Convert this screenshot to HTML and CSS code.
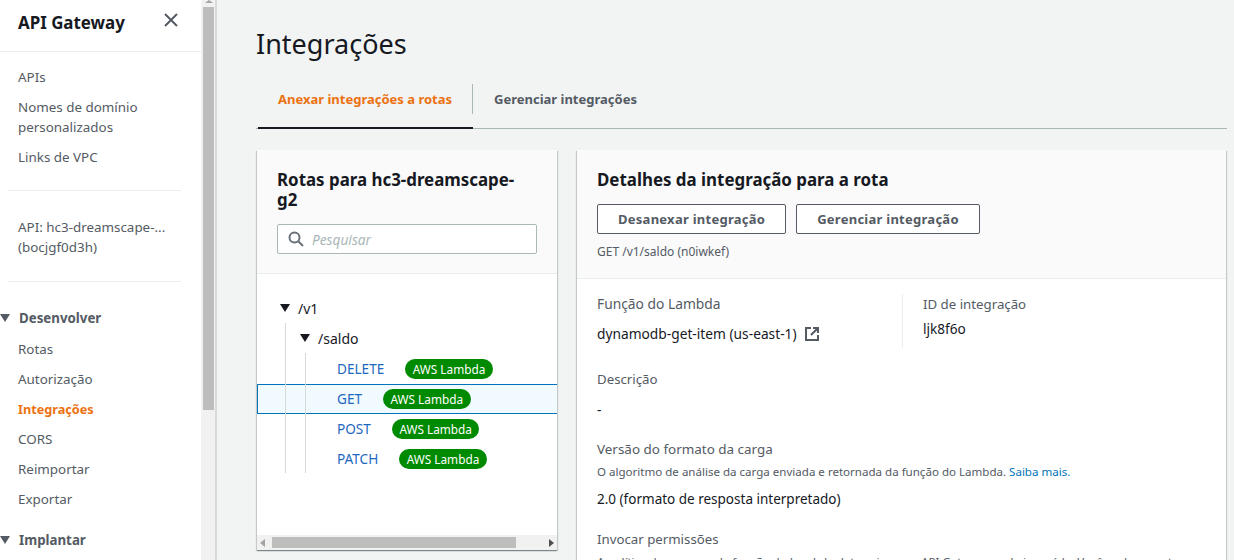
FILE: index.html
```html
<!DOCTYPE html>
<html>
<head>
  <meta charset="utf-8">
  <title>Integrações</title>
  <link rel="stylesheet" href="styles.css">
</head>

<body>
  <nav class="sidebar">
    <div class="side-content">
      <div class="side-head">
        <h2>API Gateway</h2>
        <svg class="close" width="16" height="16" viewBox="0 0 16 16"><path d="M2 2l12 12M14 2L2 14" /></svg>
      </div>
      <ul class="side-list first">
        <li>APIs</li>
        <li>Nomes de domínio personalizados</li>
        <li>Links de VPC</li>
      </ul>
      <hr class="side-line">
      <ul class="side-list api">
        <li>API: hc3-dreamscape-...<br>(bocjgf0d3h)</li>
      </ul>
      <hr class="side-line">
      <div class="side-group"><span class="caret"></span>Desenvolver</div>
      <ul class="side-list sub">
        <li>Rotas</li>
        <li>Autorização</li>
        <li class="active">Integrações</li>
        <li>CORS</li>
        <li>Reimportar</li>
        <li>Exportar</li>
      </ul>
      <div class="side-group"><span class="caret"></span>Implantar</div>
    </div>
    <div class="side-scroll">
      <div class="side-up"></div>
      <div class="side-thumb"></div>
    </div>
  </nav>

  <main class="main">
    <h1>Integrações</h1>
    <div class="tabs">
      <div class="tab active">Anexar integrações a rotas</div>
      <div class="tab">Gerenciar integrações</div>
    </div>

    <div class="columns">
      <section class="card routes">
        <div class="card-head">
          <h3>Rotas para hc3-dreamscape-g2</h3>
          <div class="search">
            <svg width="16" height="16" viewBox="0 0 16 16"><circle cx="6.500" cy="6.500" r="5" /><path d="M10.500 10.500L15 15" /></svg>
            <span>Pesquisar</span>
          </div>
        </div>
        <div class="tree">
          <div class="tree-row level1"><span class="caret dark"></span>/v1</div>
          <div class="tree-row level2"><span class="caret dark"></span>/saldo</div>
          <div class="tree-row method"><a>DELETE</a><span class="pill">AWS Lambda</span></div>
          <div class="tree-row method selected"><a>GET</a><span class="pill">AWS Lambda</span></div>
          <div class="tree-row method"><a>POST</a><span class="pill">AWS Lambda</span></div>
          <div class="tree-row method"><a>PATCH</a><span class="pill">AWS Lambda</span></div>
          <span class="guide guide1"></span>
          <span class="guide guide2"></span>
        </div>
        <div class="h-scroll">
          <span class="arrow left"></span>
          <div class="h-track"><div class="h-thumb"></div></div>
          <span class="arrow right"></span>
        </div>
      </section>

      <section class="card details">
        <div class="card-head">
          <h3>Detalhes da integração para a rota</h3>
          <div class="buttons">
            <button type="button">Desanexar integração</button>
            <button type="button">Gerenciar integração</button>
          </div>
          <p class="small">GET /v1/saldo (n0iwkef)</p>
        </div>
        <div class="card-body">
          <div class="two-cols">
            <div class="col">
              <div class="label wide">Função do Lambda</div>
              <div class="value value-link">dynamodb-get-item (us-east-1)
                <svg width="14" height="14" viewBox="0 0 14 14"><path d="M6 1H1v12h12V8M8 1h5v5M13 1L6 8" /></svg>
              </div>
            </div>
            <div class="col id">
              <div class="label">ID de integração</div>
              <div class="value">ljk8f6o</div>
            </div>
          </div>
          <div class="field">
            <div class="label">Descrição</div>
            <div class="value dash">-</div>
          </div>
          <div class="field">
            <div class="label mid">Versão do formato da carga</div>
            <p class="small hint">O algoritmo de análise da carga enviada e retornada da função do Lambda. <a href="#">Saiba mais.</a></p>
            <div class="value tight">2.0 (formato de resposta interpretado)</div>
          </div>
          <div class="field">
            <div class="label">Invocar permissões</div>
            <p class="small hint">A política de recursos da função do Lambda determina se o API Gateway pode invocá-la. Você pode executar</p>
          </div>
        </div>
      </section>
    </div>
  </main>
</body>
</html>
```

FILE: styles.css
```css
* {
  box-sizing: border-box;
}

html,
body {
  height: 100%;
  margin: 0;
  overflow: hidden;
}

body {
  display: flex;
  background: #f2f3f3;
  color: #16191f;
  font-family: "Noto Sans", sans-serif;
  font-size: 13px;
}

/* side navigation */
.sidebar {
  display: flex;
  width: 217px;
  height: 560px;
  flex: none;
  background: #f1f1f1;
  border-right: 2px solid #d5dbdb;
}

.side-content {
  width: 201px;
  height: 560px;
  flex: none;
  overflow: hidden;
  background: #fff;
}

.side-head {
  display: flex;
  justify-content: space-between;
  height: 52px;
  padding: 12px 22px 0 18px;
  border-bottom: 1px solid #eaeded;
}

.side-head h2 {
  margin: 0;
  font-size: 16.9px;
  line-height: 22px;
  font-weight: 700;
}

.close {
  margin-top: 0;
  fill: none;
  stroke: #545b64;
  stroke-width: 2;
}

.side-list {
  margin: 0;
  padding: 0 18px;
  list-style: none;
  color: #545b64;
  font-size: 13.4px;
  line-height: 20px;
}

.side-list li {
  margin-bottom: 10px;
}

.side-list.first {
  padding-top: 15px;
  padding-bottom: 13px;
}

.side-list.api {
  padding-top: 26px;
  padding-bottom: 14px;
}

.side-line {
  height: 1px;
  margin: 0 20px 0 8px;
  border: 0;
  background: #eaeded;
}

.side-group {
  display: flex;
  align-items: center;
  height: 20px;
  margin-top: 26px;
  color: #545b64;
  font-size: 13.3px;
  font-weight: 700;
}

.side-list.sub {
  padding-top: 11px;
  padding-bottom: 1px;
}

.side-list .active {
  color: #ec7211;
  font-size: 12.7px;
  font-weight: 700;
}

.side-list.sub + .side-group {
  margin-top: 10px;
}

.caret {
  width: 0;
  height: 0;
  margin-right: 9px;
  border-style: solid;
  border-width: 8px 5px 0;
  border-color: #545b64 transparent transparent;
}

.side-scroll {
  width: 13px;
  margin-left: 2px;
}

.side-up {
  width: 0;
  height: 0;
  margin: 0 0 4px 2px;
  border-style: solid;
  border-width: 0 4px 3px;
  border-color: transparent transparent #a3a3a3;
}

.side-thumb {
  width: 11px;
  height: 403px;
  background: #bdbdbd;
}

/* main area */
.main {
  flex: 1;
  min-width: 0;
  padding: 24px 7px 0 39px;
}

h1 {
  margin: 0;
  font-size: 27px;
  line-height: 40px;
  font-weight: 400;
}

.tabs {
  display: flex;
  height: 65px;
  margin-top: 0;
  padding-top: 20px;
  border-bottom: 1px solid #aab7b8;
}

.tab {
  height: 45px;
  padding: 5px 21px 0;
  color: #545b64;
  font-weight: 700;
  line-height: 20px;
  white-space: nowrap;
}

.tab.active {
  position: relative;
  width: 215px;
  flex: none;
  margin-left: 2px;
  padding-left: 20px;
  color: #ec7211;
  border-bottom: 2px solid #16191f;
}

/* divider between the two tabs */
.tab.active::after {
  content: "";
  position: absolute;
  top: 0;
  right: 0;
  width: 1px;
  height: 30px;
  background: #aab7b8;
}

.columns {
  display: flex;
  gap: 20px;
  margin-top: 21px;
  margin-right: 1px;
}

.card {
  background: #fff;
  box-shadow: 0 1px 1px 0 rgba(0, 28, 36, 0.3), 1px 1px 1px 0 rgba(0, 28, 36, 0.15), -1px 1px 1px 0 rgba(0, 28, 36, 0.15);
}

.card-head {
  background: #fafafa;
  border-bottom: 1px solid #eaeded;
}

.card-head h3 {
  margin: 0;
  font-size: 16.9px;
  line-height: 20px;
  font-weight: 700;
}

.routes {
  position: relative;
  width: 300px;
  height: 400px;
  flex: none;
  margin-left: 1px;
}

.routes .card-head {
  height: 124px;
  padding: 20px 20px 0;
}

.routes h3 {
  padding-right: 10px;
}

.search {
  display: flex;
  align-items: center;
  gap: 8px;
  height: 30px;
  margin-top: 14px;
  padding: 0 10px;
  background: #fff;
  border: 1px solid #aab7b8;
  border-radius: 2px;
  color: #aab7b8;
  font-size: 13.7px;
  font-style: italic;
}

.search svg {
  fill: none;
  stroke: #687078;
  stroke-width: 2;
}

.tree {
  position: relative;
  padding-top: 20px;
  font-size: 14px;
}

.tree-row {
  display: flex;
  align-items: center;
  height: 30px;
  white-space: nowrap;
}

.tree-row .caret {
  margin-right: 8px;
  border-color: #16191f transparent transparent;
}

.level1 {
  padding-left: 23px;
  padding-bottom: 2px;
}

.level2 {
  padding-left: 43px;
  padding-bottom: 2px;
}

.method {
  padding-left: 80px;
}

.method a {
  margin-right: 21px;
  padding-bottom: 2px;
  color: #1f68c0;
  font-size: 13.6px;
}

.selected {
  background: #f1faff;
  border: 1px solid #0073bb;
  border-right: 0;
  padding-left: 79px;
}

.pill {
  height: 20px;
  padding: 0 7.5px;
  border-radius: 10px;
  background: #008a00;
  color: #fff;
  font-size: 11.8px;
  line-height: 20px;
}

.guide {
  position: absolute;
  width: 1px;
  background: #d5dbdb;
}

.guide1 {
  left: 28px;
  top: 49px;
  height: 150px;
}

.guide2 {
  left: 48px;
  top: 79px;
  height: 120px;
}

.h-scroll {
  position: absolute;
  left: 0;
  right: 0;
  bottom: 0;
  display: flex;
  align-items: center;
  height: 15px;
  background: #f1f1f1;
}

.h-track {
  flex: 1;
  padding: 0 14px 0 0;
}

.h-thumb {
  width: 244px;
  height: 11px;
  background: #bdbdbd;
}

.arrow {
  width: 0;
  height: 0;
  border-style: solid;
  border-width: 4px 5px;
}

.arrow.left {
  margin: 0 7px 0 3px;
  border-left-width: 0;
  border-color: transparent #a3a3a3 transparent transparent;
}

.arrow.right {
  margin-right: 3px;
  border-right-width: 0;
  border-color: transparent transparent transparent #505050;
}

.details {
  flex: 1;
  min-width: 0;
}

.details .card-head {
  height: 129px;
  padding: 20px 20px 0;
}

.buttons {
  display: flex;
  gap: 10px;
  margin-top: 14px;
}

button {
  height: 30px;
  padding: 0 20px;
  background: #fff;
  border: 1px solid #545b64;
  border-radius: 2px;
  color: #545b64;
  font-family: inherit;
  font-size: 13px;
  font-weight: 700;
  letter-spacing: 0.26px;
}

.small {
  margin: 0;
  color: #545b64;
  font-size: 11.55px;
  line-height: 16px;
}

.details .card-head .small {
  margin-top: 10px;
  font-size: 12px;
}

.card-body {
  padding: 15px 20px 0;
  line-height: 20px;
}

.two-cols {
  display: flex;
  margin-bottom: 21px;
}

.col {
  width: 305px;
  height: 54px;
  flex: none;
}

.col.id {
  padding-left: 20px;
  border-left: 1px solid #eaeded;
}

.label {
  color: #545b64;
  font-size: 13.25px;
}

.label.wide {
  font-size: 13.8px;
}

.label.mid {
  font-size: 13.45px;
}

.value {
  margin-top: 10px;
  font-size: 13.6px;
}

.value.dash {
  margin-top: 12px;
  line-height: 18px;
}

.value-link {
  display: flex;
  align-items: center;
  gap: 8px;
  font-size: 13.75px;
}

.col.id .value {
  margin-top: 5px;
}

.value-link svg {
  fill: none;
  stroke: #545b64;
  stroke-width: 2;
}

.field {
  margin-bottom: 20px;
}

.field:last-child {
  margin-bottom: 0;
}

.hint {
  margin-top: 5px;
}

.hint a {
  color: #0073bb;
  text-decoration: none;
}

.value.tight {
  margin-top: 9px;
  font-size: 13.5px;
}
```
